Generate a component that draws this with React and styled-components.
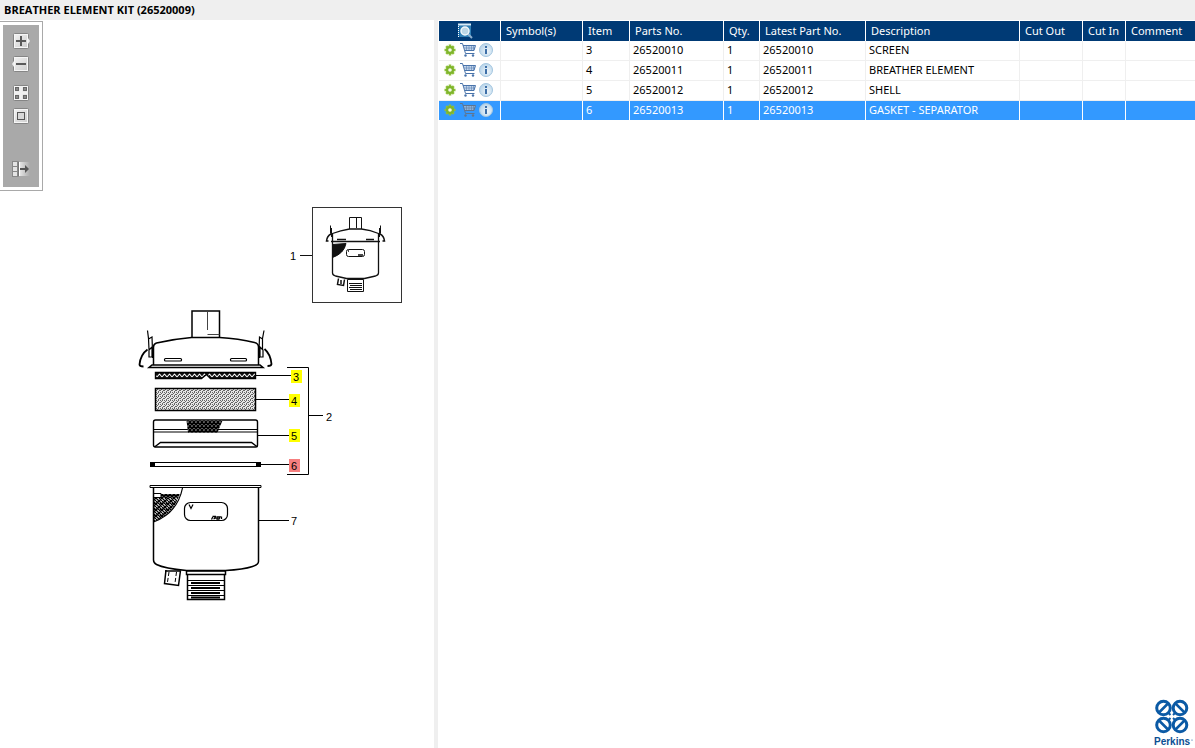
import React, {useState} from 'react'
import styled, {createGlobalStyle} from 'styled-components'

const GlobalStyle = createGlobalStyle`
* {
    box-sizing: border-box;
}
body {
    margin: 0;
    background-color: #fff;
    color: #000;
    font-family: "Noto Sans", "Open Sans", sans-serif;
    font-size: 11px;
}
`

const Page = styled.div`
display:flex;
flex-direction:column;
min-height:100vh;
`

const Title = styled.h1`
margin:0;
padding:0 4px;
height:20px;
line-height:20px;
font-family:"Open Sans", "Noto Sans", sans-serif;
font-size:11px;
font-weight:700;
background-color:#efefef;
`

const Panels = styled.main`
display:grid;
grid-template-columns: 434px 4px 1fr;
flex:1;
`

const DrawingPanel = styled.section`
display:flex;
flex-direction:column;
align-items:flex-start;
padding-top:1px;
`

const Splitter = styled.div`
background-color:#efefef;
`

const PartsPanel = styled.section`
display:flex;
flex-direction:column;
padding:1px 0 0 1px;
`

const ToolFrame = styled.div`
padding:3px;
border:1px solid #a9a9a9;
border-left:0;
`

const Tools = styled.div`
display:flex;
flex-direction:column;
align-items:center;
width:36px;
padding:8px 0 10px;
background-color:#a9a9a9;
`

const ToolButton = styled.button`
display:block;
margin:${props => props.$before || 0}px 0 0;
padding:0;
border:0;
background:none;
line-height:0;
cursor:pointer;
`

const Drawing = styled.svg`
display:block;
width:280px;
height:410px;
margin:9px 0 0 130px;

text {
    font-family: "Liberation Sans", Arial, sans-serif;
    font-size: 11px;
}
`

const Table = styled.table`
width:100%;
table-layout:fixed;
border-collapse:separate;
border-spacing:0;
`

const Head = styled.th`
height:20px;
padding:0 0 0 5px;
border-right:1px solid #fff;
background-color:#003a75;
color:#fff;
font-weight:400;
line-height:18px;
text-align:left;
white-space:nowrap;

&:first-child {
    padding-left:18px;
}
&:last-child {
    border-right:0;
}
`

const Cell = styled.td`
height:20px;
padding:0 0 2px 3px;
border-right:1px solid #efefef;
border-bottom:1px solid #efefef;
line-height:16px;
white-space:nowrap;

&:last-child {
    border-right:0;
}
`

const Row = styled.tr`
cursor:pointer;
background-color:${props => props.$selected ? '#3399ff' : '#fff'};
color:${props => props.$selected ? '#fff' : '#000'};

> td {
    ${props => props.$selected && 'border-color:#fff;'}
}
`

const Actions = styled.div`
display:flex;
gap:2px;
`

const IconButton = styled.button`
display:block;
padding:0;
border:0;
background:none;
line-height:0;
cursor:pointer;
`

const Brand = styled.svg`
display:block;
width:42px;
height:50px;
margin:auto 1px 0 auto;

text {
    font-family: "Liberation Sans", Arial, sans-serif;
    font-size: 10px;
    font-weight: 700;
}
`

const columns = [
    {name: 'Symbol(s)', width: 82},
    {name: 'Item', width: 47},
    {name: 'Parts No.', width: 94},
    {name: 'Qty.', width: 36},
    {name: 'Latest Part No.', width: 106},
    {name: 'Description', width: 154},
    {name: 'Cut Out', width: 63},
    {name: 'Cut In', width: 43},
    {name: 'Comment'},
]

const parts = [
    {item: '3', number: '26520010', qty: '1', description: 'SCREEN'},
    {item: '4', number: '26520011', qty: '1', description: 'BREATHER ELEMENT'},
    {item: '5', number: '26520012', qty: '1', description: 'SHELL'},
    {item: '6', number: '26520013', qty: '1', description: 'GASKET - SEPARATOR'},
]

const ToolPlate = ({children}) => (
    <svg width="18" height="16" viewBox="0 0 18 16">
        <defs>
            <linearGradient id="plate" x1="0" y1="0" x2="1" y2="1">
                <stop offset="0" stopColor="#f4f4f4"/>
                <stop offset="1" stopColor="#cccccc"/>
            </linearGradient>
        </defs>
        {children}
    </svg>
)

const Plate = () => (
    <g>
        <rect x="1.5" y=".5" width="15" height="15" rx="1" fill="url(#plate)" stroke="#858585"/>
        <rect x="2.5" y="1.5" width="13" height="13" fill="none" stroke="#f6f6f6"/>
    </g>
)

const ZoomInIcon = () => (
    <ToolPlate>
        <Plate/>
        <path d="M16 5l2 3-2 3z" fill="#eee"/>
        <path d="M9 3v10M4 8h10" stroke="#5a5a5a" strokeWidth="2"/>
    </ToolPlate>
)

const ZoomOutIcon = () => (
    <ToolPlate>
        <Plate/>
        <path d="M2 5L0 8l2 3z" fill="#eee"/>
        <path d="M4 8h10" stroke="#5a5a5a" strokeWidth="2"/>
    </ToolPlate>
)

const FitIcon = () => (
    <ToolPlate>
        <Plate/>
        <path d="M9 1v14M2 8h14" stroke="#f0f0f0" strokeWidth="3"/>
        <g fill="#8a8a8a" stroke="#666">
            <rect x="3.5" y="2.5" width="3" height="3"/>
            <rect x="11.5" y="2.5" width="3" height="3"/>
            <rect x="3.5" y="10.5" width="3" height="3"/>
            <rect x="11.5" y="10.5" width="3" height="3"/>
        </g>
    </ToolPlate>
)

const ActualSizeIcon = () => (
    <ToolPlate>
        <Plate/>
        <rect x="5.5" y="4.5" width="7" height="7" fill="#d8d8d8" stroke="#555"/>
    </ToolPlate>
)

const HideListIcon = () => (
    <ToolPlate>
        <defs>
            <linearGradient id="fade">
                <stop offset="0" stopColor="#f0f0f0"/>
                <stop offset="1" stopColor="#a9a9a9"/>
            </linearGradient>
        </defs>
        <rect x="6" y="1" width="12" height="14" fill="url(#fade)"/>
        <path d="M6.500 .5v15" stroke="#777"/>
        <g fill="#e4e4e4" stroke="#888">
            <rect x=".5" y=".5" width="5" height="5"/>
            <rect x=".5" y="5.500" width="5" height="5"/>
            <rect x=".5" y="10.500" width="5" height="5"/>
        </g>
        <path d="M7.500 1v14" stroke="#fff"/>
        <path d="M8 7h5V4l4 4-4 4V9H8z" fill="#555"/>
    </ToolPlate>
)

const SearchListIcon = () => (
    <svg width="17" height="17" viewBox="0 0 17 17">
        <rect x="1" y="1" width="13" height="13" fill="#1b6ba6"/>
        <path d="M1 1.500h13" stroke="#d8ecf8" strokeWidth="2"/>
        <path d="M1.500 3v11" stroke="#fff" strokeDasharray="1 1"/>
        <path d="M3 3h11v11H3z" fill="#2f7fb5"/>
        <path d="M11 11l4 4" stroke="#8fb0cf" strokeWidth="2"/>
        <circle cx="8" cy="8" r="4" fill="#bcd7e6" stroke="#f2f7fa" strokeWidth="1.500"/>
    </svg>
)

const GearIcon = () => (
    <svg width="16" height="16" viewBox="0 0 16 16">
        <g stroke="#8dbf3a" strokeWidth="2.600">
            <path d="M8 2.500v11M2.500 8h11M4.200 4.200l7.600 7.600M11.800 4.200l-7.600 7.600"/>
        </g>
        <circle cx="8" cy="8" r="4" fill="#7fb52b"/>
        <circle cx="8" cy="8" r="1.800" fill="#f4faea"/>
    </svg>
)

const CartIcon = ({muted}) => {
    const line = muted ? '#5f7590' : '#4a74ab'
    return (
        <svg width="16" height="16" viewBox="0 0 16 16">
            <path d="M3.500 3.500h12L14 8.500H5z" fill={muted ? '#8fb4dc' : '#c3d5ec'}/>
            <g fill="none" stroke={line}>
                <path d="M0 1.500h2.500L5.500 11.500h9"/>
                <path d="M3 3.500h12.500L14 8.500H5"/>
                <path d="M4 6h11M6.500 3.500v5M9 3.500v5M11.500 3.500v5M13.500 3.500v5" strokeWidth=".5"/>
            </g>
            <circle cx="5.500" cy="13.500" r="1.200" fill={line}/>
            <circle cx="13" cy="13.500" r="1.200" fill={line}/>
        </svg>
    )
}

const InfoIcon = () => (
    <svg width="16" height="16" viewBox="0 0 16 16">
        <defs>
            <radialGradient id="glass" cx=".6" cy=".6" r=".6">
                <stop offset="0" stopColor="#eef5fa"/>
                <stop offset="1" stopColor="#b9d5ea"/>
            </radialGradient>
        </defs>
        <circle cx="8" cy="8" r="6.500" fill="url(#glass)" stroke="#a3c6e0"/>
        <path d="M8 7v5" stroke="#3d6fa8" strokeWidth="2"/>
        <path d="M8 4v2" stroke="#3d6fa8" strokeWidth="2"/>
    </svg>
)

const Callout = ({x, y, color, children}) => (
    <g>
        <rect x={x} y={y} width="11" height="13" fill={color}/>
        <text x={x + 2} y={y + 11}>{children}</text>
    </g>
)

// breather assembly, exploded from lid (top) to bowl (bottom)
const BreatherDrawing = ({selected}) => {
    const mark = item => item === selected ? '#f67f7f' : '#ffff00'
    return (
        <Drawing viewBox="130 200 280 410" role="img" aria-label="Breather element kit drawing">
            <defs>
                <pattern id="dots" width="4" height="4" patternUnits="userSpaceOnUse">
                    <rect width="4" height="4" fill="#e6e6e6"/>
                    <path d="M0 .5h1M2 .5h1M1 1.500h1M3 2.500h1M0 2.500h1M2 3.500h1" stroke="#666"/>
                </pattern>
                <pattern id="mesh" width="4" height="4" patternUnits="userSpaceOnUse">
                    <rect width="4" height="4" fill="#fff"/>
                    <path d="M0 0l4 4M4 0L0 4" stroke="#000" strokeWidth="1.600"/>
                </pattern>
                <pattern id="weave" width="6" height="6" patternUnits="userSpaceOnUse">
                    <rect width="6" height="6" fill="#fff"/>
                    <path d="M0 3l3 3M0 0l6 6M3 0l3 3M6 0L3 3M3 3L0 6M5 5l-2 2" stroke="#000" strokeWidth="1.300"/>
                </pattern>
                <pattern id="zigzag" x="157" y="373" width="5" height="5" patternUnits="userSpaceOnUse">
                    <rect width="5" height="5" fill="#111"/>
                    <path d="M0 4l2.500-3L5 4" fill="none" stroke="#fff" strokeWidth="1.100"/>
                </pattern>
            </defs>

            {/* complete unit */}
            <g fill="none" stroke="#111">
                <rect x="312.500" y="207.500" width="89" height="95" stroke="#333"/>
                <path d="M300 255.500h12"/>
                <path d="M349.500 229v-11.500h12V229M356.500 218v10"/>
                <path d="M332.500 241v-7.500q8-3 17-4.500h12q9 1 17 4.500v7.500" strokeWidth="1.300"/>
                <path d="M331 241.500h49M332.500 242v31q0 2 3 3l11 2.500h18l11-2.500q3-1 3-3v-31" strokeWidth="1.300"/>
                <path d="M337 239.500h9M366 239.500h8" strokeWidth="1.500"/>
                <path d="M330.500 225.500v8l2 4M331.500 228v9M380.500 225.500v8l-2 4M379.500 228v9"/>
                <path d="M331 234q-4 2-4.500 7h2M380 234q4 2 4.500 7h-2" strokeWidth="1.500"/>
                <path d="M332.500 244.500l13.500-1q-2 10-13.500 14z" fill="#111"/>
                <rect x="346.500" y="249.500" width="18" height="7" rx="2"/>
                <path d="M358 255h5M348 251h1" strokeWidth="1.500"/>
                <path d="M338.500 278.500l-1 6 6 1 1-6M341 280v4" strokeWidth="1.500"/>
                <path d="M347.500 279.500h16v12h-16zM349 283.500h13M350 285.500h12M349 287.500h13M350 289.500h12"/>
            </g>
            <text x="290" y="260">1</text>

            {/* lid */}
            <g fill="none" stroke="#000" strokeWidth="1.500">
                <path d="M192 337.500v-26.500h27.500v26.500"/>
                <path d="M207.500 312v18M207.500 334.500h12" stroke="#444" strokeWidth="1"/>
                <path d="M153.500 365v-18q0-3 3-4 17-4 35-5.500h28q19 1 35 5 4 1 4 4.500v18"/>
                <path d="M152 365h108l3 2.500H149z" fill="#fff"/>
                <rect x="164.500" y="358.500" width="17" height="2.500" rx="1" strokeWidth="1.200"/>
                <rect x="230.500" y="358.500" width="16" height="2.500" rx="1" strokeWidth="1.200"/>
                <path d="M147.500 330.500l1 8 .5 11M148.500 339l3.500-2 .5 14M149 350l3-3v10h-3z" strokeWidth="1.200"/>
                <path d="M264 330.500l-1.500 8v11M262.500 339l-3-2-.5 14M263 350l-3-3v10h3z" strokeWidth="1.200"/>
                <path d="M153 348v10M259 348v10" strokeWidth="2"/>
                <path d="M147.500 349.500q-7 5-8 15 0 2 4 2M264.500 349q6 5 7 15 0 2-4 2" strokeWidth="1.800"/>
            </g>

            {/* screen */}
            <path d="M155.500 372.500h100v6h-45l-4-4-5 4h-46z" fill="url(#zigzag)" stroke="#000" strokeWidth="1.400"/>

            {/* element */}
            <rect x="155.500" y="388.500" width="100" height="22" fill="url(#dots)" stroke="#000" strokeWidth="1.500"/>

            {/* shell */}
            <g fill="none" stroke="#000" strokeWidth="1.400">
                <rect x="153.500" y="420" width="104" height="27" rx="2"/>
                <path d="M154 429.500h103M154 432h103" strokeWidth="1"/>
                <path d="M186.500 420.500h36l-5 12H188z" fill="url(#mesh)" stroke="none"/>
                <path d="M154.500 447l6-4.500h91l6 4.500"/>
            </g>

            {/* gasket */}
            <rect x="150.500" y="462.500" width="110" height="4" fill="#fff" stroke="#000"/>
            <path d="M150 462h5v5h-5zM256 462h5v5h-5z"/>

            {/* bowl */}
            <g fill="none" stroke="#000" strokeWidth="1.500">
                <path d="M150 485.500h111v2H150z" strokeWidth="1"/>
                <path d="M153.500 498l25-1q-5 17-25 24.500z" fill="url(#weave)" stroke="none"/>
                <path d="M161 494h19l-2 4h-17z" fill="url(#mesh)" stroke="none"/>
                <path d="M154 493.500h7v4h-7" strokeWidth="1"/>
                <path d="M182.500 488q-5 25-29 34" strokeWidth="1.200"/>
                <path d="M153.500 488v72q0 3 3 4.500 8 4 30 6h39q18-1 27-4 6-2 6-5v-73.500"/>
                <rect x="184.500" y="502.500" width="43" height="18" rx="6" strokeWidth="1.200"/>
                <path d="M189 504.500l2 4 2-4" strokeWidth="1.200"/>
                <path d="M213 516.500l-1.500 3M216 516.500h-2l1.500 1.500-2 1M217 517h3l-1 2h-2zM221.500 519v-2.500" strokeWidth="1.300"/>
                <path d="M166 570l-1.500 13.500 14 2 2-15M165 571h16"/>
                <path d="M169 572l-1.500 10M176.500 572l-1.500 11" strokeWidth="1" strokeDasharray="4 2"/>
                <path d="M186.500 571h39v3.500h-39zM187.500 575v24.500h37V575"/>
                <path d="M188 580.500h36M188 585.500h36M188 590.500h36M188 595.500h36" strokeWidth="1"/>
                <path d="M191 583h29M191 588h29M191 593h29M191 597.500h29" strokeWidth="1.800"/>
            </g>

            {/* leader lines */}
            <g fill="none" stroke="#000">
                <path d="M256 375.500h35M256 399.500h33M258 435.500h31M261 464.500h28M259 520.500h30"/>
                <path d="M287 367.500h21.500v107H287M309 415.500h14"/>
            </g>
            <Callout x={291} y={370} color={mark('3')}>3</Callout>
            <Callout x={289} y={394} color={mark('4')}>4</Callout>
            <Callout x={289} y={429} color={mark('5')}>5</Callout>
            <Callout x={289} y={459} color={mark('6')}>6</Callout>
            <text x="326" y="421">2</text>
            <text x="291" y="525">7</text>
        </Drawing>
    )
}

const PerkinsLogo = () => (
    <Brand viewBox="1152 698 42 50" role="img" aria-label="Perkins">
        <g fill="none" stroke="#0b5aa5" strokeWidth="3">
            <circle cx="1163.500" cy="708" r="6.800"/>
            <circle cx="1180" cy="708" r="6.800"/>
            <circle cx="1163.500" cy="725" r="6.800"/>
            <circle cx="1180" cy="725" r="6.800"/>
            <path d="M1158.500 713l10-10M1185 713l-10-10M1158.500 720l10 10M1185 720l-10 10" strokeWidth="2.500"/>
            <path d="M1168 712.500l2.500 2.500M1175.500 712.500l-2.500 2.500M1168 720.500l2.500-2.500M1175.500 720.500l-2.500-2.500" strokeWidth="2"/>
        </g>
        <text x="1154" y="745" fill="#0b4f93">Perkins</text>
        <circle cx="1192" cy="740" r=".6" fill="#0b4f93"/>
    </Brand>
)

export default function App() {
    const [selected, setSelected] = useState('6')

    return (
        <Page>
            <GlobalStyle/>
            <Title>BREATHER ELEMENT KIT (26520009)</Title>
            <Panels>
                <DrawingPanel>
                    <ToolFrame>
                        <Tools>
                            <ToolButton aria-label="Zoom in"><ZoomInIcon/></ToolButton>
                            <ToolButton $before={7} aria-label="Zoom out"><ZoomOutIcon/></ToolButton>
                            <ToolButton $before={13} aria-label="Fit to window"><FitIcon/></ToolButton>
                            <ToolButton $before={7} aria-label="Actual size"><ActualSizeIcon/></ToolButton>
                            <ToolButton $before={37} aria-label="Hide parts list"><HideListIcon/></ToolButton>
                        </Tools>
                    </ToolFrame>
                    <BreatherDrawing selected={selected}/>
                </DrawingPanel>
                <Splitter/>
                <PartsPanel>
                    <Table>
                        <colgroup>
                            <col width="62"/>
                            {columns.map(column => <col key={column.name} width={column.width}/>)}
                        </colgroup>
                        <thead>
                            <tr>
                                <Head>
                                    <IconButton aria-label="Search list"><SearchListIcon/></IconButton>
                                </Head>
                                {columns.map(column => <Head key={column.name}>{column.name}</Head>)}
                            </tr>
                        </thead>
                        <tbody>
                            {parts.map(part => (
                                <Row
                                    key={part.item}
                                    $selected={part.item === selected}
                                    onClick={() => setSelected(part.item)}
                                >
                                    <Cell>
                                        <Actions>
                                            <IconButton aria-label="Options"><GearIcon/></IconButton>
                                            <IconButton aria-label="Add to cart"><CartIcon muted={part.item === selected}/></IconButton>
                                            <IconButton aria-label="Information"><InfoIcon/></IconButton>
                                        </Actions>
                                    </Cell>
                                    <Cell/>
                                    <Cell>{part.item}</Cell>
                                    <Cell>{part.number}</Cell>
                                    <Cell>{part.qty}</Cell>
                                    <Cell>{part.number}</Cell>
                                    <Cell>{part.description}</Cell>
                                    <Cell/>
                                    <Cell/>
                                    <Cell/>
                                </Row>
                            ))}
                        </tbody>
                    </Table>
                    <PerkinsLogo/>
                </PartsPanel>
            </Panels>
        </Page>
    )
}
